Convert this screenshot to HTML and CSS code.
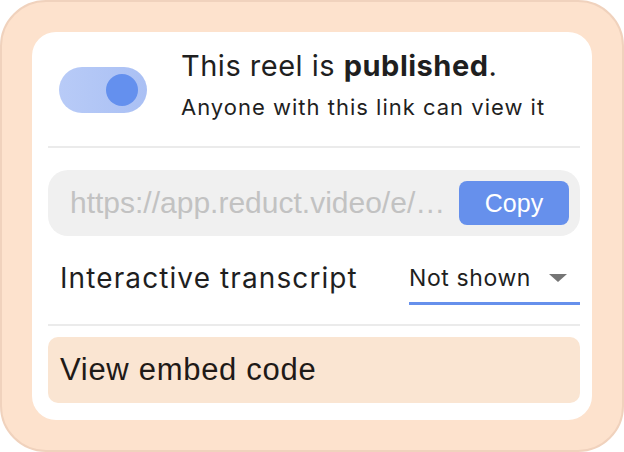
FILE: index.html
```html
<!DOCTYPE html>
<html lang="en">
<head>
    <meta charset="UTF-8">
    <meta name="viewport" content="width=device-width, initial-scale=1.0">
    <title>Share reel</title>
    <link rel="stylesheet" href="styles.css">
</head>
<body>
    <div class="frame">
        <div class="card">
            <div class="publish-row">
                <div class="toggle">
                    <span class="knob"></span>
                </div>
                <div class="publish-text">
                    <div class="title">This reel is <b>published</b>.</div>
                    <div class="subtitle">Anyone with this link can view it</div>
                </div>
            </div>

            <div class="divider"></div>

            <div class="link-field">
                <span class="link-url">https://app.reduct.video/e/…</span>
                <button class="copy-btn">Copy</button>
            </div>

            <div class="option-row">
                <span class="option-label">Interactive transcript</span>
                <div class="select">
                    <span>Not shown</span>
                    <svg class="caret" width="18" height="8" viewBox="0 0 18 8"><path d="M0 0 L18 0 L9 8 Z" fill="#757575"/></svg>
                </div>
            </div>

            <div class="divider"></div>

            <div class="embed-btn">View embed code</div>
        </div>
    </div>
</body>
</html>
```

FILE: styles.css
```css
body {
    margin: 0;
    background-color: #fff;
    font-family: Inter, "Noto Sans", sans-serif;
    color: #1f1f1f;
}

.frame {
    box-sizing: border-box;
    width: 624px;
    height: 452px;
    padding: 30px;
    background-color: #fde2cd;
    border: 2px solid #f0d2bd;
    border-radius: 46px;
}

.card {
    box-sizing: border-box;
    height: 388px;
    padding: 16px 12px 16px 16px;
    background-color: #fff;
    border-radius: 24px;
}

.publish-row {
    display: flex;
    align-items: flex-start;
    height: 98px;
}

.toggle {
    position: relative;
    flex: none;
    width: 88px;
    height: 46px;
    margin: 19px 34px 0 11px;
    border-radius: 23px;
    background: linear-gradient(90deg, #b8cbf7, #aac0f4);
}

.knob {
    position: absolute;
    top: 7px;
    right: 9px;
    width: 32px;
    height: 32px;
    border-radius: 50%;
    background-color: #6490ee;
}

.publish-text {
    padding-top: 1px;
}

.title {
    font-size: 29px;
    line-height: 34px;
    letter-spacing: 0.5px;
}

.title b {
    font-weight: 700;
}

.subtitle {
    margin-top: 11px;
    font-size: 22px;
    line-height: 26px;
    letter-spacing: 1px;
}

.divider {
    height: 2px;
    background-color: #ebebeb;
}

.link-field {
    display: flex;
    align-items: center;
    justify-content: space-between;
    height: 66px;
    margin-top: 22px;
    padding: 0 11px 0 22px;
    background-color: #f0f0f0;
    border-radius: 20px;
}

.link-url {
    font-family: "Liberation Sans", Arial, sans-serif;
    font-size: 30px;
    color: #c2c2c2;
}

.copy-btn {
    width: 110px;
    height: 44px;
    border: none;
    border-radius: 8px;
    background-color: #6690ec;
    color: #fff;
    font-family: "Liberation Sans", Arial, sans-serif;
    font-size: 25px;
}

.option-row {
    display: flex;
    align-items: flex-end;
    justify-content: space-between;
    height: 88px;
    padding: 0 0 19px 12px;
    box-sizing: border-box;
}

.option-label {
    margin-bottom: 10px;
    font-size: 28px;
    line-height: 34px;
    letter-spacing: 1.1px;
}

.select {
    display: flex;
    align-items: center;
    justify-content: space-between;
    width: 171px;
    box-sizing: border-box;
    padding: 0 13px 10px 0;
    border-bottom: 3px solid #6690ec;
    font-size: 23px;
    line-height: 28px;
    letter-spacing: 0.6px;
}

.caret {
    display: block;
}

.embed-btn {
    display: flex;
    align-items: center;
    height: 66px;
    margin-top: 11px;
    padding-left: 12px;
    background-color: #fae5d2;
    border-radius: 10px;
    font-family: "Liberation Sans", Arial, sans-serif;
    font-size: 31px;
    letter-spacing: 0.7px;
    color: #1f1a17;
}
```
